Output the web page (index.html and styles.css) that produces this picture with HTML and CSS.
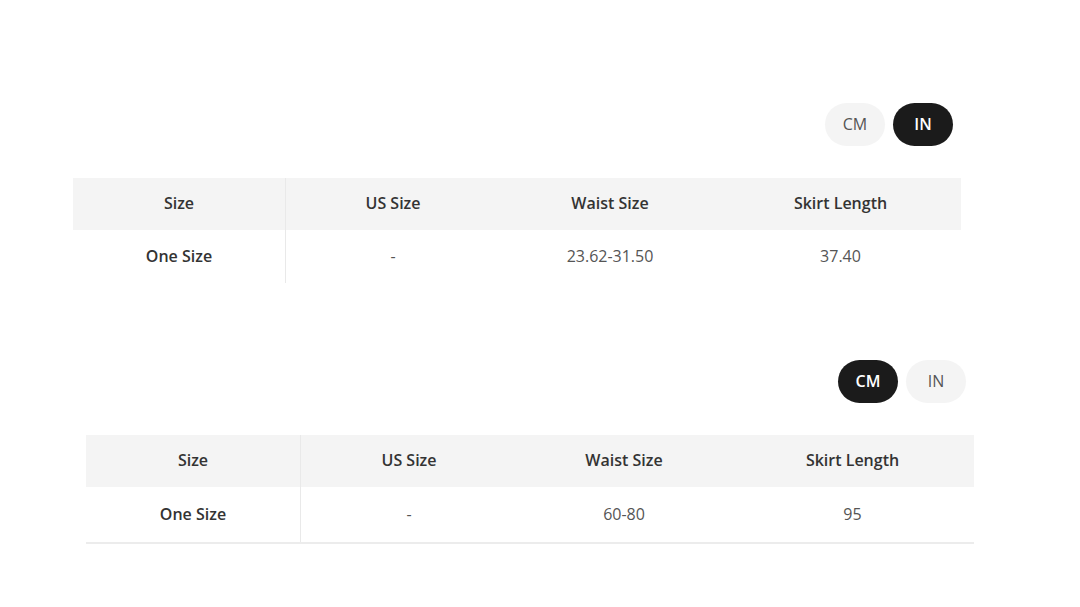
FILE: index.html
```html
<!DOCTYPE html>
<html lang="en">
<head>
  <meta charset="UTF-8">
  <meta name="viewport" content="width=device-width, initial-scale=1">
  <title>Size Chart</title>
  <link rel="stylesheet" href="styles.css">
</head>
<body>
  <!-- Tabla en pulgadas -->
  <div class="chart chart-in">
    <div class="unit-toggle">
      <span class="unit">CM</span>
      <span class="unit active">IN</span>
    </div>
    <table class="size-table">
      <thead>
        <tr>
          <th class="col-size">Size</th>
          <th class="col-us">US Size</th>
          <th class="col-waist">Waist Size</th>
          <th class="col-length">Skirt Length</th>
        </tr>
      </thead>
      <tbody>
        <tr>
          <td class="first">One Size</td>
          <td>-</td>
          <td>23.62-31.50</td>
          <td>37.40</td>
        </tr>
      </tbody>
    </table>
  </div>

  <!-- Tabla en centímetros -->
  <div class="chart chart-cm">
    <div class="unit-toggle">
      <span class="unit active">CM</span>
      <span class="unit">IN</span>
    </div>
    <table class="size-table bordered">
      <thead>
        <tr>
          <th class="col-size">Size</th>
          <th class="col-us">US Size</th>
          <th class="col-waist">Waist Size</th>
          <th class="col-length">Skirt Length</th>
        </tr>
      </thead>
      <tbody>
        <tr>
          <td class="first">One Size</td>
          <td>-</td>
          <td>60-80</td>
          <td>95</td>
        </tr>
      </tbody>
    </table>
  </div>
</body>
</html>
```

FILE: styles.css
```css
/* ----- GENERAL ----- */
body {
  font-family: "Open Sans", "Segoe UI", sans-serif;
  margin: 0;
  background: #ffffff;
  color: #333333;
}

.chart {
  width: 888px;
}

.chart-in {
  margin: 103px 0 0 73px;
}

.chart-cm {
  margin: 77px 0 0 86px;
}

/* ----- UNIT TOGGLE ----- */
.unit-toggle {
  display: flex;
  justify-content: flex-end;
  gap: 8px;
  padding-right: 8px;
  margin-bottom: 32px;
}

.unit {
  width: 60px;
  height: 43px;
  box-sizing: border-box;
  padding-bottom: 2px;
  border-radius: 22px;
  background: #f4f4f4;
  color: #555555;
  font-size: 16px;
  display: flex;
  align-items: center;
  justify-content: center;
}

.unit.active {
  background: #1b1b1b;
  color: #ffffff;
  font-weight: 600;
}

/* ----- TABLE ----- */
.size-table {
  width: 100%;
  border-collapse: collapse;
  table-layout: fixed;
}

.size-table th {
  background: #f4f4f4;
  height: 49px;
  padding: 0 0 3px;
  font-size: 16px;
  font-weight: 600;
  color: #333333;
  text-align: center;
}

.size-table td {
  height: 52px;
  padding: 0 0 1px;
  font-size: 16px;
  color: #555555;
  text-align: center;
}

.size-table .col-size { width: 212px; }
.size-table .col-us { width: 214px; }
.size-table .col-waist { width: 220px; }

.bordered .col-size { width: 214px; }
.bordered .col-us { width: 216px; }
.bordered .col-waist { width: 214px; }

.size-table th.col-size,
.size-table td.first {
  border-right: 1px solid #e9e9e9;
}

.size-table td.first {
  font-weight: 600;
  color: #333333;
}

.size-table.bordered td {
  height: 54px;
  border-bottom: 2px solid #ececec;
}
```
